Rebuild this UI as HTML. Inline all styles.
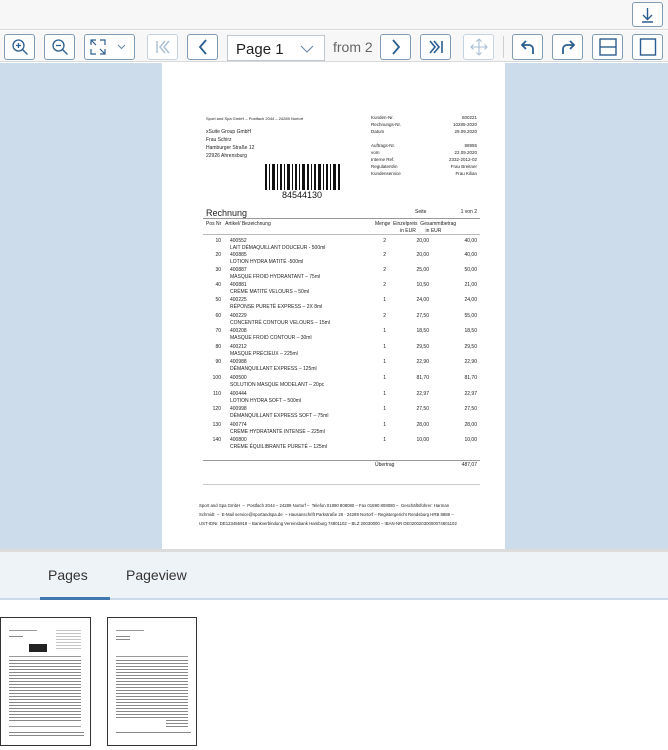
<!DOCTYPE html>
<html><head><meta charset="utf-8"><style>
*{margin:0;padding:0;box-sizing:border-box}
body{width:668px;height:746px;overflow:hidden;background:#fff;font-family:"Liberation Sans",sans-serif;position:relative}
.a{position:absolute}
.btn{position:absolute;top:34px;width:31px;height:26px;border:1px solid #7f9bb5;border-radius:3px;background:#fff;display:flex;align-items:center;justify-content:center}
.btn.dis{border-color:#c5d3e0}
.t{position:absolute;font-size:5px;color:#222;white-space:nowrap;line-height:6px}
.r{text-align:right}
</style></head><body>
<div class="a" style="left:0;top:0;width:668px;height:30px;background:#f7f7f7;border-bottom:1px solid #d9d9d9"></div>
<div class="a" style="left:632px;top:2px;width:31px;height:25px;border:1px solid #7f9bb5;border-radius:3px;background:#fff">
<svg width="29" height="23"><path d="M14.5 5v11M10 12l4.5 4.5L19 12M9 19h11" stroke="#2a5d8f" stroke-width="1.4" fill="none"/></svg></div>
<div class="a" style="left:0;top:31px;width:668px;height:31px;background:#f7f7f7;border-bottom:1px solid #d9d9d9"></div>

<div class="btn" style="left:4px"><svg width="20" height="20"><circle cx="8.5" cy="8.5" r="5.5" stroke="#2a5d8f" stroke-width="1.3" fill="none"/><path d="M12.5 12.5l5 5M6 8.5h5M8.5 6v5" stroke="#2a5d8f" stroke-width="1.3"/></svg></div>
<div class="btn" style="left:44px"><svg width="20" height="20"><circle cx="8.5" cy="8.5" r="5.5" stroke="#2a5d8f" stroke-width="1.3" fill="none"/><path d="M12.5 12.5l5 5M6 8.5h5" stroke="#2a5d8f" stroke-width="1.3"/></svg></div>
<div class="btn" style="left:84px;width:51px"><svg width="44" height="20"><path d="M3 8V3h5M3 3l5 5M17 12v5h-5M17 17l-5-5M12 3h5v5M3 12v5h5" stroke="#2a5d8f" stroke-width="1.2" fill="none"/><path d="M30 8l3.5 3.5L37 8" stroke="#6a88a6" stroke-width="1" fill="none"/></svg></div>
<div class="btn dis" style="left:147px"><svg width="20" height="20"><path d="M4 4v12M12 4l-5 6 5 6M16 4l-5 6 5 6" stroke="#a9bfd3" stroke-width="1.4" fill="none"/></svg></div>
<div class="btn" style="left:187px"><svg width="20" height="20"><path d="M13 3l-6 7 6 7" stroke="#2a5d8f" stroke-width="1.8" fill="none"/></svg></div>
<div class="a" style="left:227px;top:35px;width:98px;height:26px;border:1px solid #c0c7cf;background:#fff;font-size:15px;color:#222;padding:5px 0 0 8px">Page 1<svg class="a" style="left:72px;top:8px" width="14" height="10"><path d="M1 2l6 6 6-6" stroke="#6a88a6" stroke-width="1.1" fill="none"/></svg></div>
<div class="a" style="left:333px;top:39px;font-size:14px;color:#666">from 2</div>
<div class="btn" style="left:380px"><svg width="20" height="20"><path d="M7 3l6 7-6 7" stroke="#2a5d8f" stroke-width="1.8" fill="none"/></svg></div>
<div class="btn" style="left:420px"><svg width="20" height="20"><path d="M4 4l5 6-5 6M8 4l5 6-5 6M16 4v12" stroke="#2a5d8f" stroke-width="1.6" fill="none"/></svg></div>
<div class="btn dis" style="left:463px"><svg width="20" height="20"><path d="M10 2v16M2 10h16M7.5 4.5L10 2l2.5 2.5M7.5 15.5L10 18l2.5-2.5M4.5 7.5L2 10l2.5 2.5M15.5 7.5L18 10l-2.5 2.5" stroke="#a9bfd3" stroke-width="1.1" fill="none"/></svg></div>
<div class="a" style="left:503px;top:36px;width:1px;height:22px;background:#d0d0d0"></div>
<div class="btn" style="left:512px"><svg width="20" height="20"><path d="M15 17v-5a4 4 0 0 0-4-4H5M8 4L4 8l4 4" stroke="#2a5d8f" stroke-width="1.8" fill="none"/></svg></div>
<div class="btn" style="left:552px"><svg width="20" height="20"><path d="M5 17v-5a4 4 0 0 1 4-4h6M12 4l4 4-4 4" stroke="#2a5d8f" stroke-width="1.8" fill="none"/></svg></div>
<div class="btn" style="left:592px"><svg width="20" height="20"><rect x="2" y="2" width="16" height="16" stroke="#2a5d8f" stroke-width="1.4" fill="none"/><path d="M2 10h16" stroke="#2a5d8f" stroke-width="1.4"/></svg></div>
<div class="btn" style="left:632px"><svg width="20" height="20"><rect x="2.5" y="2" width="15" height="16" stroke="#2a5d8f" stroke-width="1.4" fill="none"/></svg></div>

<div class="a" style="left:0;top:63px;width:668px;height:487px;background:#cddcea"></div>
<div class="a" style="left:162px;top:63px;width:343px;height:486px;background:#fff"></div>
<div class="a" style="left:0;top:549px;width:668px;height:3px;background:#dcdcdc"></div>

<div class="t" style="left:206px;top:116px;font-size:4px">Sport and Spa GmbH – Postfach 2044 – 24289 Nortorf</div>
<div class="t" style="left:206px;top:129px">xSuite Group GmbH</div>
<div class="t" style="left:206px;top:137px">Frau Schirz</div>
<div class="t" style="left:206px;top:145px">Hamburger Straße 12</div>
<div class="t" style="left:206px;top:153px">22926 Ahrensburg</div>
<div class="t" style="left:371px;top:114px;line-height:7px;font-size:4.5px">Kunden-Nr.<br>Rechnungs-Nr.<br>Datum<br><br>Auftrags-Nr.<br>vom<br>Interne Ref.<br>Regulatent/in<br>Kundenservice</div>
<div class="t r" style="left:420px;top:114px;width:57px;line-height:7px;font-size:4.5px">600221<br>10285-2020<br>29.09.2020<br><br>88955<br>22.09.2020<br>2332-2012-02<br>Frau Breitner<br>Frau Kilian</div>
<svg class="a" style="left:265px;top:164px" width="76" height="26">
<g fill="#111"><rect x="0" width="2" height="26"/><rect x="4" width="1" height="26"/><rect x="7" width="3" height="26"/><rect x="12" width="1" height="26"/><rect x="15" width="2" height="26"/><rect x="19" width="1" height="26"/><rect x="22" width="3" height="26"/><rect x="27" width="1" height="26"/><rect x="30" width="2" height="26"/><rect x="34" width="1" height="26"/><rect x="37" width="3" height="26"/><rect x="42" width="2" height="26"/><rect x="46" width="1" height="26"/><rect x="49" width="2" height="26"/><rect x="53" width="3" height="26"/><rect x="58" width="1" height="26"/><rect x="61" width="2" height="26"/><rect x="65" width="1" height="26"/><rect x="68" width="3" height="26"/><rect x="73" width="2" height="26"/></g></svg>
<div class="t" style="left:282px;top:190px;font-size:9px;line-height:10px;color:#111">84544130</div>
<div class="t" style="left:206px;top:208px;font-size:9px;line-height:10px">Rechnung</div>
<div class="t" style="left:415px;top:209px">Seite</div>
<div class="t r" style="left:440px;top:209px;width:37px">1 von 2</div>
<div class="a" style="left:203px;top:218px;width:277px;height:1px;background:#999"></div>
<div class="t" style="left:206px;top:221px">Pos Nr &nbsp; Artikel/ Bezeichnung</div>
<div class="t" style="left:375px;top:221px">Menge &nbsp;Einzelpreis &nbsp;Gesammtbetrag</div>
<div class="t" style="left:400px;top:228px">in EUR &nbsp; &nbsp; &nbsp; in EUR</div>
<div class="a" style="left:203px;top:234px;width:277px;height:1px;background:#bbb"></div>

<div id="rows"></div>
<div class="a" style="left:203px;top:460px;width:277px;height:1px;background:#999"></div>
<div class="t" style="left:375px;top:462px">Übertrag</div>
<div class="t r" style="left:440px;top:462px;width:37px">487,07</div>
<div class="a" style="left:203px;top:484px;width:277px;height:1px;background:#ccc"></div>
<div class="t" style="left:199px;top:501px;font-size:4.3px;line-height:9px">Sport and Spa GmbH &nbsp;– &nbsp;Postfach 2044 – 24289 Nortorf – &nbsp;Telefon 01890 808080 – Fax 01890 808080 – &nbsp;Geschäftsführer: Harman<br>Schmidt &nbsp;– &nbsp;E-Mail service@sportandspa.de &nbsp;– Hausanschrift Parkstraße 28 · 24289 Nortorf – Registergericht Rendsburg HRB 8888 –<br>UST-IDNr. DE123456918 – Bankverbindung Vereinsbank Hamburg 74801102 – BLZ 20030000 – IBAN-NR DE02002030000074801102</div>

<div class="a" style="left:0;top:552px;width:668px;height:48px;background:#eef3f8;border-bottom:2px solid #cbdaea"></div>
<div class="a" style="left:48px;top:567px;font-size:14px;color:#333">Pages</div>
<div class="a" style="left:126px;top:567px;font-size:14px;color:#333">Pageview</div>
<div class="a" style="left:40px;top:597px;width:70px;height:3px;background:#3f78ae"></div>

<svg width="0" height="0" class="a"><defs><pattern id="st" width="4" height="3" patternUnits="userSpaceOnUse"><rect width="4" height="1" fill="#888"/></pattern></defs></svg>
<div class="a" style="left:0;top:617px;width:91px;height:129px;border:1px solid #333;background:#fff"><svg width="89" height="127"><g fill="#999"><rect x="8" y="12" width="28" height="1"/><rect x="8" y="17" width="14" height="4" fill="url(#st)"/><rect x="55" y="10" width="25" height="22" fill="url(#st)" opacity=".5"/><rect x="28" y="26" width="18" height="8" fill="#222"/><rect x="8" y="38" width="72" height="1"/><rect x="8" y="42" width="72" height="62" fill="url(#st)"/><rect x="8" y="108" width="72" height="1"/><rect x="8" y="114" width="75" height="4" fill="url(#st)"/></g></svg></div>
<div class="a" style="left:107px;top:617px;width:90px;height:129px;border:1px solid #333;background:#fff"><svg width="88" height="127"><g fill="#999"><rect x="8" y="12" width="28" height="1"/><rect x="8" y="17" width="14" height="7" fill="url(#st)"/><rect x="8" y="38" width="72" height="1"/><rect x="8" y="42" width="72" height="58" fill="url(#st)"/><rect x="58" y="102" width="22" height="8" fill="url(#st)"/><rect x="8" y="112" width="75" height="3" fill="url(#st)"/></g></svg></div>

<script>
var d=[["10","400552","LAIT DÉMAQUILLANT DOUCEUR - 500ml","2","20,00","40,00",241],
["20","400885","LOTION HYDRA MATITÉ -500ml","2","20,00","40,00",255],
["30","400887","MASQUE FROID HYDRANTANT – 75ml","2","25,00","50,00",270],
["40","400881","CRÈME MATITÉ VELOURS – 50ml","2","10,50","21,00",285],
["50","400225","RÉPONSE PURETÉ EXPRESS – 2X 8ml","1","24,00","24,00",300],
["60","400229","CONCENTRÉ CONTOUR VELOURS – 15ml","2","27,50","55,00",316],
["70","400208","MASQUE FROID CONTOUR – 30ml","1","18,50","18,50",331],
["80","400212","MASQUE PRÉCIEUX – 225ml","1","29,50","29,50",347],
["90","400988","DÉMANQUILLANT EXPRESS – 125ml","1","22,90","22,90",362],
["100","400500","SOLUTION MASQUE MODELANT – 20pc","1","81,70","81,70",378],
["110","400444","LOTION HYDRA SOFT – 500ml","1","22,97","22,97",394],
["120","400998","DÉMANQUILLANT EXPRESS SOFT – 75ml","1","27,50","27,50",409],
["130","400774","CRÈME HYDRATANTE INTENSE – 225ml","1","28,00","28,00",425],
["140","400800","CRÈME ÉQUILIBRANTE PURETÉ – 125ml","1","10,00","10,00",440]];
var h="";d.forEach(function(r){var y=r[6]-3;
h+='<div class="t r" style="left:200px;top:'+y+'px;width:21px">'+r[0]+'</div>'+
'<div class="t" style="left:230px;top:'+y+'px">'+r[1]+'</div>'+
'<div class="t" style="left:230px;top:'+(y+7)+'px">'+r[2]+'</div>'+
'<div class="t r" style="left:370px;top:'+y+'px;width:16px">'+r[3]+'</div>'+
'<div class="t r" style="left:400px;top:'+y+'px;width:29px">'+r[4]+'</div>'+
'<div class="t r" style="left:447px;top:'+y+'px;width:30px">'+r[5]+'</div>';});
document.getElementById("rows").outerHTML=h;
</script>
</body></html>
